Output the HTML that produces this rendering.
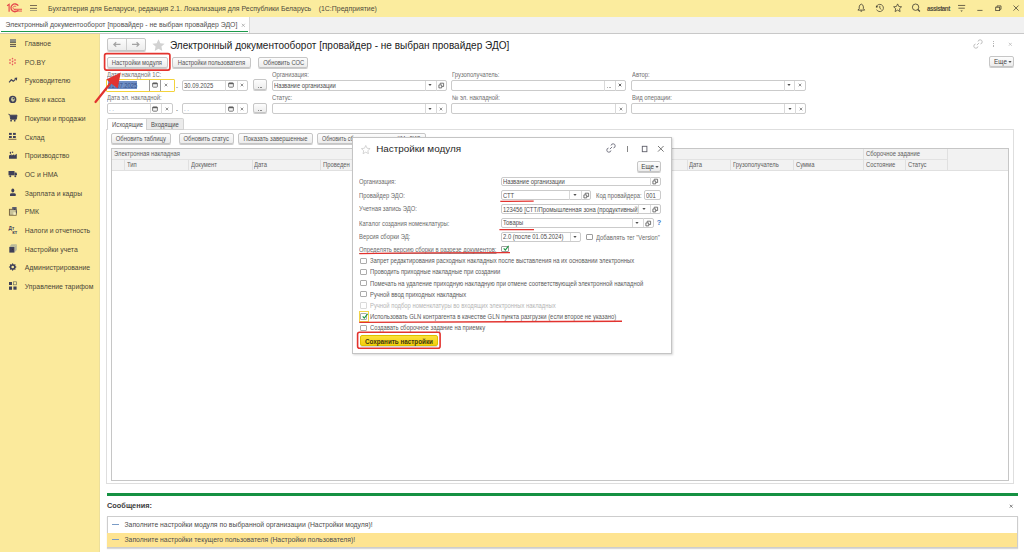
<!DOCTYPE html>
<html><head><meta charset="utf-8">
<style>
*{box-sizing:border-box;margin:0;padding:0}
html,body{width:1024px;height:552px;overflow:hidden;background:#fff;font-family:"Liberation Sans",sans-serif;color:#4d4d4d;position:relative}
.a{position:absolute}
.t{position:absolute;white-space:nowrap;line-height:1}
.btn{position:absolute;border:1px solid #c6c6c6;border-radius:2px;background:linear-gradient(#fdfdfd,#ececec);box-shadow:0 1px 0.6px rgba(0,0,0,.2);color:#4d4d4d;text-align:center;white-space:nowrap}
.fld{position:absolute;border:1px solid #cbcbcb;border-radius:2px;background:#fff}
</style></head><body>
<div class="a" style="left:0.00px;top:0.00px;width:1024.00px;height:16.50px;background:#fbec9e"></div>
<div class="a" style="left:0.00px;top:16.50px;width:1024.00px;height:16.50px;background:#f1f1f1"></div>
<div class="a" style="left:0.00px;top:33.00px;width:100.00px;height:1.00px;background:#d2c9b0"></div>
<div class="a" style="left:100.00px;top:33.00px;width:924.00px;height:1.00px;background:#c8c8c8"></div>
<div class="a" style="left:0.00px;top:16.50px;width:249.00px;height:16.50px;background:#fff"></div>
<div class="a" style="left:249.00px;top:16.50px;width:1.00px;height:16.50px;background:#d9d9d9"></div>
<div class="a" style="left:1.00px;top:30.50px;width:247.00px;height:1.50px;background:#1d9a4b"></div>
<div class="t" style="left:5.50px;top:22.10px;font-size:6.85px;color:#505050;">Электронный документооборот [провайдер - не выбран провайдер ЭДО]</div>
<svg class="a" style="left:241.00px;top:22.70px" width="4.6" height="4.6" viewBox="0 0 4 4"><path d="M0.7 0.7L3.3 3.3M3.3 0.7L0.7 3.3" stroke="#a8a8a8" stroke-width="0.70"/></svg>
<div class="t" style="left:48.00px;top:5.80px;font-size:6.95px;color:#4e4a3c;">Бухгалтерия для Беларуси, редакция 2.1. Локализация для Республики Беларусь</div>
<div class="t" style="left:318.70px;top:5.80px;font-size:6.95px;color:#4e4a3c;">(1С:Предприятие)</div>
<div class="a" style="left:0.00px;top:34.00px;width:100.00px;height:518.00px;background:#fbea9c"></div>
<div class="a" style="left:99.40px;top:34.00px;width:1.00px;height:518.00px;background:#ecdf9c"></div>
<div class="t" style="left:24.80px;top:41.10px;font-size:6.85px;color:#4a4638;">Главное</div>
<div class="t" style="left:24.80px;top:59.78px;font-size:6.85px;color:#4a4638;">РО.BY</div>
<div class="t" style="left:24.80px;top:78.46px;font-size:6.85px;color:#4a4638;">Руководителю</div>
<div class="t" style="left:24.80px;top:97.14px;font-size:6.85px;color:#4a4638;">Банк и касса</div>
<div class="t" style="left:24.80px;top:115.82px;font-size:6.85px;color:#4a4638;">Покупки и продажи</div>
<div class="t" style="left:24.80px;top:134.50px;font-size:6.85px;color:#4a4638;">Склад</div>
<div class="t" style="left:24.80px;top:153.18px;font-size:6.85px;color:#4a4638;">Производство</div>
<div class="t" style="left:24.80px;top:171.86px;font-size:6.85px;color:#4a4638;">ОС и НМА</div>
<div class="t" style="left:24.80px;top:190.54px;font-size:6.85px;color:#4a4638;">Зарплата и кадры</div>
<div class="t" style="left:24.80px;top:209.22px;font-size:6.85px;color:#4a4638;">РМК</div>
<div class="t" style="left:24.80px;top:227.90px;font-size:6.85px;color:#4a4638;">Налоги и отчетность</div>
<div class="t" style="left:24.80px;top:246.58px;font-size:6.85px;color:#4a4638;">Настройки учета</div>
<div class="t" style="left:24.80px;top:265.26px;font-size:6.85px;color:#4a4638;">Администрирование</div>
<div class="t" style="left:24.80px;top:283.94px;font-size:6.85px;color:#4a4638;">Управление тарифом</div>
<div class="btn" style="left:107px;top:38px;width:39px;height:12.5px"></div>
<div class="a" style="left:126.30px;top:38.60px;width:0.80px;height:11.40px;background:#cdcdcd"></div>
<svg class="a" style="left:104px;top:35px" width="44" height="18" viewBox="104 35 44 18"><path d="M113.8 44.4H120.5M116.2 42.2L113.9 44.4L116.2 46.6" fill="none" stroke="#a3a3a3" stroke-width="1.3"/><path d="M132 44.4H139M136.6 42.2L138.9 44.4L136.6 46.6" fill="none" stroke="#a3a3a3" stroke-width="1.3"/></svg>
<svg class="a" style="left:152px;top:38.5px" width="13" height="12" viewBox="0 0 24 23"><path d="M12 0.5l3.5 7.6 8.3 0.9-6.2 5.6 1.7 8.2L12 18.6l-7.3 4.2 1.7-8.2L0.2 9l8.3-0.9z" fill="#d2d2d2"/></svg>
<div class="t" style="left:170.00px;top:40.80px;font-size:10.03px;color:#222;">Электронный документооборот [провайдер - не выбран провайдер ЭДО]</div>
<svg class="a" style="left:973.00px;top:39.00px" width="10" height="10" viewBox="0 0 10 10"><g fill="none" stroke="#b9b9b9" stroke-width="0.9"><path d="M2.54 5.03A2.1 2.1 0 1 0 4.97 7.46"/><path d="M5.03 2.54A2.1 2.1 0 1 1 7.46 4.97"/><path d="M3.9 6.1L6.1 3.9"/></g></svg>
<div class="a" style="left:993.10px;top:41.10px;width:1.10px;height:1.30px;background:#b4b4b4"></div>
<div class="a" style="left:993.10px;top:43.20px;width:1.10px;height:1.30px;background:#b4b4b4"></div>
<div class="a" style="left:993.10px;top:45.30px;width:1.10px;height:1.40px;background:#b4b4b4"></div>
<svg class="a" style="left:1007.70px;top:41.70px" width="4.6" height="4.6" viewBox="0 0 4 4"><path d="M0.7 0.7L3.3 3.3M3.3 0.7L0.7 3.3" stroke="#bdbdbd" stroke-width="0.70"/></svg>
<div class="btn" style="left:106.50px;top:56.50px;width:61.50px;height:11.00px;"></div>
<div class="t" style="left:106.50px;top:59.50px;width:61.50px;text-align:center;font-size:6.5px;color:#555"><span style="display:inline-block;transform:scaleX(0.9000);">Настройки модуля</span></div>
<div class="btn" style="left:172.00px;top:56.50px;width:79.00px;height:11.00px;"></div>
<div class="t" style="left:172.00px;top:59.50px;width:79.00px;text-align:center;font-size:6.5px;color:#555"><span style="display:inline-block;transform:scaleX(0.9000);">Настройки пользователя</span></div>
<div class="btn" style="left:258.30px;top:56.50px;width:50.10px;height:11.00px;"></div>
<div class="t" style="left:258.30px;top:59.50px;width:50.10px;text-align:center;font-size:6.5px;color:#555"><span style="display:inline-block;transform:scaleX(0.9000);">Обновить СОС</span></div>
<div class="btn" style="left:989.30px;top:56.00px;width:24.40px;height:11.20px;"></div>
<div class="t" style="left:994.10px;top:59.00px;font-size:6.3px;color:#444;">Еще</div>
<svg class="a" style="left:1007.60px;top:60.30px" width="4" height="4" viewBox="0 0 4 4"><path d="M0.4 1.1H3.6L2 3Z" fill="#555"/></svg>
<div class="t" style="left:107.00px;top:72.00px;font-size:6.5px;color:#707070;transform:scaleX(0.9000);transform-origin:0 0;">Дата накладной 1С:</div>
<div class="t" style="left:272.20px;top:72.00px;font-size:6.5px;color:#707070;transform:scaleX(0.9000);transform-origin:0 0;">Организация:</div>
<div class="t" style="left:451.50px;top:72.00px;font-size:6.5px;color:#707070;transform:scaleX(0.9000);transform-origin:0 0;">Грузополучатель:</div>
<div class="t" style="left:631.50px;top:72.00px;font-size:6.5px;color:#707070;transform:scaleX(0.9000);transform-origin:0 0;">Автор:</div>
<div class="t" style="left:107.00px;top:95.00px;font-size:6.5px;color:#707070;transform:scaleX(0.9000);transform-origin:0 0;">Дата эл. накладной:</div>
<div class="t" style="left:272.20px;top:95.00px;font-size:6.5px;color:#707070;transform:scaleX(0.9000);transform-origin:0 0;">Статус:</div>
<div class="t" style="left:451.50px;top:95.00px;font-size:6.5px;color:#707070;transform:scaleX(0.9000);transform-origin:0 0;">№ эл. накладной:</div>
<div class="t" style="left:631.50px;top:95.00px;font-size:6.5px;color:#707070;transform:scaleX(0.9000);transform-origin:0 0;">Вид операции:</div>
<div class="a" style="left:105.50px;top:78.60px;width:69.00px;height:13.60px;border:1.2px solid #f3d33c;border-radius:1px;background:#fff"></div>
<div class="a" style="left:149.40px;top:80.00px;width:0.70px;height:10.80px;background:#9a9a9a"></div>
<div class="a" style="left:160.40px;top:80.00px;width:0.70px;height:10.80px;background:#9a9a9a"></div>
<div class="a" style="left:108.00px;top:81.40px;width:29.20px;height:7.20px;background:#6f8ec4"></div>
<div class="t" style="left:108.30px;top:82.60px;font-size:6.5px;color:#34508a;transform:scaleX(0.9000);transform-origin:0 0;">01.07.2025</div>
<svg class="a" style="left:152px;top:82px" width="6" height="6" viewBox="0 0 6 6"><rect x="0.6" y="0.9" width="4.8" height="4.3" rx="0.8" fill="#f4f4f4" stroke="#5e5e5e" stroke-width="0.8"/><rect x="0.6" y="0.9" width="4.8" height="1.3" fill="#5e5e5e"/></svg>
<svg class="a" style="left:164.30px;top:83.30px" width="4.0" height="4.0" viewBox="0 0 4 4"><path d="M0.7 0.7L3.3 3.3M3.3 0.7L0.7 3.3" stroke="#777" stroke-width="0.80"/></svg>
<div class="t" style="left:176.20px;top:83.50px;font-size:6.5px;color:#666;transform:scaleX(0.9000);transform-origin:0 0;">-</div>
<div class="fld" style="left:182.30px;top:80.00px;width:65.30px;height:11.00px;"></div>
<div class="a" style="left:225.40px;top:80.50px;width:0.80px;height:10.00px;background:#d9d9d9"></div>
<div class="a" style="left:236.50px;top:80.50px;width:0.80px;height:10.00px;background:#d9d9d9"></div>
<div class="t" style="left:183.80px;top:83.00px;font-size:6.5px;color:#4d4d4d;transform:scaleX(0.9000);transform-origin:0 0;">30.09.2025</div>
<svg class="a" style="left:228px;top:82px" width="6" height="6" viewBox="0 0 6 6"><rect x="0.6" y="0.9" width="4.8" height="4.3" rx="0.8" fill="#f4f4f4" stroke="#5e5e5e" stroke-width="0.8"/><rect x="0.6" y="0.9" width="4.8" height="1.3" fill="#5e5e5e"/></svg>
<svg class="a" style="left:240.00px;top:83.30px" width="4.0" height="4.0" viewBox="0 0 4 4"><path d="M0.7 0.7L3.3 3.3M3.3 0.7L0.7 3.3" stroke="#777" stroke-width="0.80"/></svg>
<div class="btn" style="left:252.60px;top:79.40px;width:14.90px;height:10.90px;"></div>
<div class="a" style="left:257.95px;top:86.95px;width:0.90px;height:0.90px;background:#8a8a8a"></div>
<div class="a" style="left:259.55px;top:86.95px;width:0.90px;height:0.90px;background:#8a8a8a"></div>
<div class="a" style="left:261.15px;top:86.95px;width:0.90px;height:0.90px;background:#8a8a8a"></div>
<div class="fld" style="left:272.20px;top:80.00px;width:174.50px;height:11.00px;"></div>
<div class="a" style="left:424.50px;top:80.50px;width:0.80px;height:10.00px;background:#d9d9d9"></div>
<div class="a" style="left:435.60px;top:80.50px;width:0.80px;height:10.00px;background:#d9d9d9"></div>
<div class="t" style="left:273.80px;top:83.00px;font-size:6.5px;color:#4d4d4d;transform:scaleX(0.9000);transform-origin:0 0;">Название организации</div>
<svg class="a" style="left:428.00px;top:83.30px" width="4" height="4" viewBox="0 0 4 4"><path d="M0.4 1.1H3.6L2 3Z" fill="#505050"/></svg>
<svg class="a" style="left:438px;top:82px" width="7" height="7" viewBox="0 0 7 7"><path d="M0.9 2.9H3.7V5.9H0.9Z" fill="#fff" stroke="#555" stroke-width="0.8"/><path d="M2.2 2.5V1.2H5.6V4.5H4.1" fill="none" stroke="#555" stroke-width="0.8"/></svg>
<div class="fld" style="left:451.20px;top:80.00px;width:174.80px;height:11.00px;"></div>
<div class="a" style="left:603.90px;top:80.50px;width:0.80px;height:10.00px;background:#d9d9d9"></div>
<div class="a" style="left:614.80px;top:80.50px;width:0.80px;height:10.00px;background:#d9d9d9"></div>
<div class="a" style="left:607.25px;top:86.95px;width:0.90px;height:0.90px;background:#b0b0b0"></div>
<div class="a" style="left:608.85px;top:86.95px;width:0.90px;height:0.90px;background:#b0b0b0"></div>
<div class="a" style="left:610.45px;top:86.95px;width:0.90px;height:0.90px;background:#b0b0b0"></div>
<svg class="a" style="left:618.20px;top:83.30px" width="4.0" height="4.0" viewBox="0 0 4 4"><path d="M0.7 0.7L3.3 3.3M3.3 0.7L0.7 3.3" stroke="#666" stroke-width="1.00"/></svg>
<div class="fld" style="left:631.40px;top:80.00px;width:174.30px;height:11.00px;"></div>
<div class="a" style="left:783.50px;top:80.50px;width:0.80px;height:10.00px;background:#d9d9d9"></div>
<div class="a" style="left:794.25px;top:80.50px;width:0.80px;height:10.00px;background:#d9d9d9"></div>
<svg class="a" style="left:787.00px;top:83.30px" width="4" height="4" viewBox="0 0 4 4"><path d="M0.4 1.1H3.6L2 3Z" fill="#505050"/></svg>
<svg class="a" style="left:798.00px;top:83.30px" width="4.0" height="4.0" viewBox="0 0 4 4"><path d="M0.7 0.7L3.3 3.3M3.3 0.7L0.7 3.3" stroke="#777" stroke-width="0.80"/></svg>
<div class="fld" style="left:107.00px;top:103.00px;width:65.50px;height:11.00px;"></div>
<div class="a" style="left:150.00px;top:103.50px;width:0.80px;height:10.00px;background:#d9d9d9"></div>
<div class="a" style="left:161.00px;top:103.50px;width:0.80px;height:10.00px;background:#d9d9d9"></div>
<div class="t" style="left:109.00px;top:106.00px;font-size:6.5px;color:#8aa0c0;transform:scaleX(0.9000);transform-origin:0 0;">. .</div>
<svg class="a" style="left:152px;top:106px" width="6" height="6" viewBox="0 0 6 6"><rect x="0.6" y="0.9" width="4.8" height="4.3" rx="0.8" fill="#f4f4f4" stroke="#5e5e5e" stroke-width="0.8"/><rect x="0.6" y="0.9" width="4.8" height="1.3" fill="#5e5e5e"/></svg>
<svg class="a" style="left:164.50px;top:106.50px" width="4.0" height="4.0" viewBox="0 0 4 4"><path d="M0.7 0.7L3.3 3.3M3.3 0.7L0.7 3.3" stroke="#777" stroke-width="0.80"/></svg>
<div class="t" style="left:176.20px;top:107.00px;font-size:6.5px;color:#666;transform:scaleX(0.9000);transform-origin:0 0;">-</div>
<div class="fld" style="left:182.30px;top:103.00px;width:65.30px;height:11.00px;"></div>
<div class="a" style="left:225.40px;top:103.50px;width:0.80px;height:10.00px;background:#d9d9d9"></div>
<div class="a" style="left:236.50px;top:103.50px;width:0.80px;height:10.00px;background:#d9d9d9"></div>
<div class="t" style="left:184.00px;top:106.00px;font-size:6.5px;color:#8aa0c0;transform:scaleX(0.9000);transform-origin:0 0;">. .</div>
<svg class="a" style="left:228px;top:106px" width="6" height="6" viewBox="0 0 6 6"><rect x="0.6" y="0.9" width="4.8" height="4.3" rx="0.8" fill="#f4f4f4" stroke="#5e5e5e" stroke-width="0.8"/><rect x="0.6" y="0.9" width="4.8" height="1.3" fill="#5e5e5e"/></svg>
<svg class="a" style="left:240.00px;top:106.50px" width="4.0" height="4.0" viewBox="0 0 4 4"><path d="M0.7 0.7L3.3 3.3M3.3 0.7L0.7 3.3" stroke="#777" stroke-width="0.80"/></svg>
<div class="btn" style="left:252.60px;top:102.60px;width:14.90px;height:10.90px;"></div>
<div class="a" style="left:257.95px;top:110.15px;width:0.90px;height:0.90px;background:#8a8a8a"></div>
<div class="a" style="left:259.55px;top:110.15px;width:0.90px;height:0.90px;background:#8a8a8a"></div>
<div class="a" style="left:261.15px;top:110.15px;width:0.90px;height:0.90px;background:#8a8a8a"></div>
<div class="fld" style="left:272.20px;top:103.00px;width:174.70px;height:11.00px;"></div>
<div class="a" style="left:424.50px;top:103.50px;width:0.80px;height:10.00px;background:#d9d9d9"></div>
<div class="a" style="left:435.60px;top:103.50px;width:0.80px;height:10.00px;background:#d9d9d9"></div>
<svg class="a" style="left:428.00px;top:106.50px" width="4" height="4" viewBox="0 0 4 4"><path d="M0.4 1.1H3.6L2 3Z" fill="#505050"/></svg>
<svg class="a" style="left:439.20px;top:106.50px" width="4.0" height="4.0" viewBox="0 0 4 4"><path d="M0.7 0.7L3.3 3.3M3.3 0.7L0.7 3.3" stroke="#777" stroke-width="0.80"/></svg>
<div class="fld" style="left:451.20px;top:103.00px;width:175.40px;height:11.00px;"></div>
<div class="a" style="left:615.30px;top:103.50px;width:0.80px;height:10.00px;background:#d9d9d9"></div>
<svg class="a" style="left:619.00px;top:106.50px" width="4.0" height="4.0" viewBox="0 0 4 4"><path d="M0.7 0.7L3.3 3.3M3.3 0.7L0.7 3.3" stroke="#777" stroke-width="0.80"/></svg>
<div class="fld" style="left:631.40px;top:103.00px;width:175.10px;height:11.00px;"></div>
<div class="a" style="left:783.90px;top:103.50px;width:0.80px;height:10.00px;background:#d9d9d9"></div>
<div class="a" style="left:795.00px;top:103.50px;width:0.80px;height:10.00px;background:#d9d9d9"></div>
<svg class="a" style="left:787.50px;top:106.50px" width="4" height="4" viewBox="0 0 4 4"><path d="M0.4 1.1H3.6L2 3Z" fill="#505050"/></svg>
<svg class="a" style="left:798.70px;top:106.50px" width="4.0" height="4.0" viewBox="0 0 4 4"><path d="M0.7 0.7L3.3 3.3M3.3 0.7L0.7 3.3" stroke="#777" stroke-width="0.80"/></svg>
<div class="a" style="left:106.20px;top:129.20px;width:907.80px;height:355.30px;border:1px solid #dedede;background:#fff"></div>
<div class="a" style="left:106.50px;top:118.30px;width:40.80px;height:11.90px;background:#fff;border:1px solid #d3d3d3;border-bottom:none;border-radius:2px 0 0 0"></div>
<div class="a" style="left:147.30px;top:118.30px;width:36.30px;height:11.70px;background:#ebebeb;border:1px solid #d3d3d3;border-left:none;border-radius:0 2px 0 0"></div>
<div class="t" style="left:111.50px;top:122.10px;font-size:6.5px;color:#4d4d4d;transform:scaleX(0.9000);transform-origin:0 0;">Исходящие</div>
<div class="t" style="left:151.00px;top:122.10px;font-size:6.5px;color:#4d4d4d;transform:scaleX(0.9000);transform-origin:0 0;">Входящие</div>
<div class="btn" style="left:111.40px;top:133.40px;width:59.60px;height:10.40px;"></div>
<div class="t" style="left:111.40px;top:136.10px;width:59.60px;text-align:center;font-size:6.5px;color:#555"><span style="display:inline-block;transform:scaleX(0.9000);">Обновить таблицу</span></div>
<div class="btn" style="left:178.70px;top:133.40px;width:55.30px;height:10.40px;"></div>
<div class="t" style="left:178.70px;top:136.10px;width:55.30px;text-align:center;font-size:6.5px;color:#555"><span style="display:inline-block;transform:scaleX(0.9000);">Обновить статус</span></div>
<div class="btn" style="left:238.30px;top:133.40px;width:74.90px;height:10.40px;"></div>
<div class="t" style="left:238.30px;top:136.10px;width:74.90px;text-align:center;font-size:6.5px;color:#555"><span style="display:inline-block;transform:scaleX(0.9000);">Показать завершенные</span></div>
<div class="btn" style="left:317.00px;top:133.40px;width:108.50px;height:10.40px;"></div>
<div class="t" style="left:322px;top:136.1px;font-size:6.5px;color:#555;transform:scaleX(0.8246);transform-origin:0 0">Обновить сборочное задание КМ - ГИС</div>
<div class="a" style="left:111.20px;top:148.20px;width:897.60px;height:332.50px;border:1px solid #c6c6c6;background:#fff"></div>
<div class="a" style="left:112.00px;top:149.00px;width:896.00px;height:21.30px;background:#f2f2f2"></div>
<div class="a" style="left:112.00px;top:159.20px;width:751.40px;height:0.80px;background:#e2e2e2"></div>
<div class="a" style="left:863.40px;top:159.20px;width:83.50px;height:0.80px;background:#e2e2e2"></div>
<div class="a" style="left:112.00px;top:170.00px;width:896.00px;height:1.00px;background:#e0e0e0"></div>
<div class="a" style="left:124.10px;top:159.60px;width:0.80px;height:10.70px;background:#e0e0e0"></div>
<div class="a" style="left:188.30px;top:159.60px;width:0.80px;height:10.70px;background:#e0e0e0"></div>
<div class="a" style="left:251.80px;top:159.60px;width:0.80px;height:10.70px;background:#e0e0e0"></div>
<div class="a" style="left:320.30px;top:159.60px;width:0.80px;height:10.70px;background:#e0e0e0"></div>
<div class="a" style="left:686.70px;top:159.60px;width:0.80px;height:10.70px;background:#e0e0e0"></div>
<div class="a" style="left:730.40px;top:159.60px;width:0.80px;height:10.70px;background:#e0e0e0"></div>
<div class="a" style="left:793.30px;top:159.60px;width:0.80px;height:10.70px;background:#e0e0e0"></div>
<div class="a" style="left:905.20px;top:159.60px;width:0.80px;height:10.70px;background:#e0e0e0"></div>
<div class="a" style="left:863.40px;top:149.00px;width:0.80px;height:21.30px;background:#e0e0e0"></div>
<div class="a" style="left:946.90px;top:149.00px;width:0.80px;height:21.30px;background:#e0e0e0"></div>
<div class="t" style="left:114.00px;top:151.10px;font-size:6.5px;color:#606060;transform:scaleX(0.9000);transform-origin:0 0;">Электронная накладная</div>
<div class="t" style="left:866.00px;top:151.10px;font-size:6.5px;color:#606060;transform:scaleX(0.9000);transform-origin:0 0;">Сборочное задание</div>
<div class="t" style="left:127.00px;top:162.20px;font-size:6.5px;color:#606060;transform:scaleX(0.9000);transform-origin:0 0;">Тип</div>
<div class="t" style="left:190.50px;top:162.20px;font-size:6.5px;color:#606060;transform:scaleX(0.9000);transform-origin:0 0;">Документ</div>
<div class="t" style="left:254.00px;top:162.20px;font-size:6.5px;color:#606060;transform:scaleX(0.9000);transform-origin:0 0;">Дата</div>
<div class="t" style="left:323.00px;top:162.20px;font-size:6.5px;color:#606060;transform:scaleX(0.9000);transform-origin:0 0;">Проведен</div>
<div class="t" style="left:689.00px;top:162.20px;font-size:6.5px;color:#606060;transform:scaleX(0.9000);transform-origin:0 0;">Дата</div>
<div class="t" style="left:733.00px;top:162.20px;font-size:6.5px;color:#606060;transform:scaleX(0.9000);transform-origin:0 0;">Грузополучатель</div>
<div class="t" style="left:796.00px;top:162.20px;font-size:6.5px;color:#606060;transform:scaleX(0.9000);transform-origin:0 0;">Сумма</div>
<div class="t" style="left:866.00px;top:162.20px;font-size:6.5px;color:#606060;transform:scaleX(0.9000);transform-origin:0 0;">Состояние</div>
<div class="t" style="left:907.50px;top:162.20px;font-size:6.5px;color:#606060;transform:scaleX(0.9000);transform-origin:0 0;">Статус</div>
<div class="a" style="left:106.50px;top:493.00px;width:911.20px;height:3.00px;background:#159142"></div>
<div class="t" style="left:107.00px;top:501.80px;font-size:7.38px;color:#3c3c3c;font-weight:700;">Сообщения:</div>
<svg class="a" style="left:1009.20px;top:504.20px" width="4.4" height="4.4" viewBox="0 0 4 4"><path d="M0.7 0.7L3.3 3.3M3.3 0.7L0.7 3.3" stroke="#666" stroke-width="0.73"/></svg>
<div class="a" style="left:106.50px;top:516.00px;width:911.20px;height:31.50px;border:1px solid #cdcdcd;background:#fff;box-shadow:0 1px 1px rgba(0,0,0,.15)"></div>
<div class="a" style="left:107.30px;top:532.90px;width:909.60px;height:13.90px;background:#fee491"></div>
<div class="a" style="left:112.30px;top:523.60px;width:6.70px;height:0.80px;background:#7a9cc6"></div>
<div class="a" style="left:112.30px;top:539.20px;width:6.70px;height:0.80px;background:#7a9cc6"></div>
<div class="t" style="left:124.50px;top:521.80px;font-size:6.84px;color:#4d4d4d;">Заполните настройки модуля по выбранной организации (Настройки модуля)!</div>
<div class="t" style="left:124.50px;top:537.30px;font-size:6.84px;color:#4d4d4d;">Заполните настройки текущего пользователя (Настройки пользователя)!</div>
<svg class="a" style="left:5px;top:36px" width="16" height="16" viewBox="0 0 16 16"><rect x="5" y="3" width="6" height="3.2" fill="#8f8f83"/><rect x="5" y="5.9" width="6" height="0.9" fill="#55554f"/><rect x="5" y="7.9" width="6" height="1" fill="#5d4f3f"/><rect x="5" y="9.8" width="6" height="1" fill="#3f4058"/></svg>
<svg class="a" style="left:5px;top:54px" width="16" height="16" viewBox="0 0 16 16"><ellipse cx="7.50" cy="4.60" rx="0.75" ry="0.95" fill="#e8585c"/><ellipse cx="10.01" cy="6.05" rx="0.75" ry="0.95" fill="#e8585c"/><ellipse cx="10.01" cy="8.95" rx="0.75" ry="0.95" fill="#e8585c"/><ellipse cx="7.50" cy="10.40" rx="0.75" ry="0.95" fill="#e8585c"/><ellipse cx="4.99" cy="8.95" rx="0.75" ry="0.95" fill="#e8585c"/><ellipse cx="4.99" cy="6.05" rx="0.75" ry="0.95" fill="#e8585c"/><ellipse cx="7.6" cy="7.4" rx="0.8" ry="1" fill="#e8585c" transform="rotate(35 7.6 7.4)"/></svg>
<svg class="a" style="left:5px;top:73px" width="16" height="16" viewBox="0 0 16 16"><path d="M4.1 9.4L6.4 6.7L8.3 8.2L10.4 6.4" fill="none" stroke="#3f4058" stroke-width="1.2" stroke-linejoin="round"/><path d="M9.2 4.9L12.2 4.6L11.9 7.7Z" fill="#3f4058"/></svg>
<svg class="a" style="left:5px;top:91px" width="16" height="16" viewBox="0 0 16 16"><circle cx="7.7" cy="8.4" r="3.7" fill="#3f4058"/><ellipse cx="7.9" cy="8.3" rx="1.8" ry="2.4" fill="#c8c89a"/><circle cx="8.4" cy="7.6" r="0.8" fill="#3f4058"/></svg>
<svg class="a" style="left:5px;top:110px" width="16" height="16" viewBox="0 0 16 16"><path d="M3.4 4.2L5 4.9L5.6 9.2H11.3L12 5.2H5.1" fill="#3f4058" stroke="#3f4058" stroke-width="0.9" stroke-linejoin="round"/><circle cx="6.1" cy="10.7" r="0.9" fill="#3f4058"/><circle cx="9.7" cy="10.7" r="0.9" fill="#3f4058"/></svg>
<svg class="a" style="left:5px;top:128px" width="16" height="16" viewBox="0 0 16 16"><rect x="4" y="4.9" width="2.8" height="2" fill="#3f4058"/><rect x="8" y="4.9" width="2.8" height="2" fill="#3f4058"/><rect x="4" y="8" width="2.8" height="2" fill="#3f4058"/><rect x="8" y="8" width="2.8" height="2" fill="#3f4058"/><rect x="3.4" y="10.8" width="8" height="0.9" fill="#6a5540"/></svg>
<svg class="a" style="left:5px;top:147px" width="16" height="16" viewBox="0 0 16 16"><path d="M4 11.8V8.6L6.6 7.3V8.5L9.2 7.2V8.4L11.8 6.8V11.8Z" fill="#3f4058"/><ellipse cx="5.4" cy="5.8" rx="0.7" ry="1.1" fill="#3f4058"/><circle cx="7.5" cy="5.2" r="0.8" fill="#3f4058"/></svg>
<svg class="a" style="left:5px;top:165px" width="16" height="16" viewBox="0 0 16 16"><rect x="3.5" y="6" width="6" height="4.3" fill="#3f4058"/><path d="M9.5 7.6H11.3L12 8.6V10.3H9.5Z" fill="#3f4058"/><circle cx="5.3" cy="11.2" r="0.95" fill="#3f4058"/><circle cx="10.3" cy="11.2" r="0.95" fill="#3f4058"/></svg>
<svg class="a" style="left:5px;top:184px" width="16" height="16" viewBox="0 0 16 16"><ellipse cx="7.8" cy="6.6" rx="1.5" ry="2" fill="#3f4058"/><path d="M5 11.9V10.3Q5 9.3 6.6 9.3H9.2Q10.7 9.3 10.7 10.3V11.9Z" fill="#3f4058"/></svg>
<svg class="a" style="left:5px;top:203px" width="16" height="16" viewBox="0 0 16 16"><rect x="4.4" y="6.3" width="6.8" height="5.9" fill="#c9c39a" stroke="#6e5c3c" stroke-width="0.9"/><rect x="8.4" y="9.3" width="2.4" height="2.5" fill="#f5eec0"/><rect x="7.2" y="4" width="4.4" height="2.6" fill="#5b5d6e"/><circle cx="9.6" cy="6.3" r="0.8" fill="#3f4058"/><rect x="11" y="7.4" width="0.7" height="3" fill="#3f4058"/></svg>
<svg class="a" style="left:5px;top:221px" width="16" height="16" viewBox="0 0 16 16"><text x="3.6" y="8.6" font-family="Liberation Sans" font-size="5.6" font-weight="700" fill="#3f4058" transform="scale(0.85 1)" transform-origin="3.6 8.6">Дт</text><text x="7.2" y="12.9" font-family="Liberation Sans" font-size="5" font-weight="700" fill="#3f4058">кт</text></svg>
<svg class="a" style="left:5px;top:240px" width="16" height="16" viewBox="0 0 16 16"><path d="M4.3 7L6.4 4.3H11.8L9.4 7Z" fill="#b9b99a"/><path d="M9.4 7L11.8 4.3V10L9.4 12.6Z" fill="#b4b69c"/><rect x="4.3" y="7" width="5.1" height="5.6" fill="#3f4058"/><circle cx="7.6" cy="9.4" r="0.6" fill="#4a2f2f"/></svg>
<svg class="a" style="left:5px;top:259px" width="16" height="16" viewBox="0 0 16 16"><g transform="translate(7.7 8)"><path d="M0 -4L1 -2.6L2.8 -2.8L2.6 -1L4 0L2.6 1L2.8 2.8L1 2.6L0 4L-1 2.6L-2.8 2.8L-2.6 1L-4 0L-2.6 -1L-2.8 -2.8L-1 -2.6Z" fill="#3f4058"/><circle r="1.3" fill="#fbec9e"/></g></svg>
<svg class="a" style="left:5px;top:278px" width="16" height="16" viewBox="0 0 16 16"><rect x="4" y="4" width="3" height="3" fill="#3f4058"/><rect x="8.6" y="3.8" width="2.8" height="3" fill="none" stroke="#6f7062" stroke-width="0.7"/><rect x="4" y="8.5" width="3" height="3.3" fill="#3f4058"/><rect x="8.4" y="8.5" width="3.2" height="3.2" fill="#3f4058"/></svg>
<svg class="a" style="left:0;top:0" width="44" height="16" viewBox="0 0 44 16"><path d="M7.1 5.8L9.1 4.4V11.7" fill="none" stroke="#e5474b" stroke-width="1.15"/><path d="M18.3 5.7A4 3.9 0 1 0 18.3 10" fill="none" stroke="#e5474b" stroke-width="1.3"/><path d="M16.2 6.6A1.9 1.7 0 1 0 15.5 9.4" fill="none" stroke="#e5474b" stroke-width="0.8"/><rect x="14" y="8.8" width="8" height="0.9" fill="#e5474b"/><rect x="14.5" y="10.6" width="7.5" height="0.9" fill="#e5474b"/><rect x="30" y="5" width="7" height="0.9" fill="#6b5f4c"/><rect x="30" y="7.9" width="7" height="0.9" fill="#6b5f4c"/><rect x="30" y="10" width="7" height="0.9" fill="#9a9577"/></svg>
<svg class="a" style="left:852px;top:0" width="172" height="16" viewBox="852 0 172 16"><path d="M857.9 10.1L859.2 8.7V6.9Q859.2 4.9 861.3 4.1Q863.4 4.9 863.4 6.9V8.7L864.7 10.1Z" fill="none" stroke="#4a4536" stroke-width="0.85" stroke-linejoin="round"/><path d="M860.5 11.1h1.6" stroke="#4a4536" stroke-width="1"/><path d="M877.1 5.6A3.6 3.6 0 1 1 876.6 9.6" fill="none" stroke="#4a4536" stroke-width="0.8"/><path d="M876 5.2L878.4 6.9L875.9 7.7Z" fill="#4a4536"/><path d="M879.8 5.8V8.2L881.3 9.4" fill="none" stroke="#4a4536" stroke-width="0.8"/><path d="M897.6 3.9L898.8 6.5L901.6 6.8L899.5 8.7L900.1 11.6L897.6 10.1L895.1 11.6L895.7 8.7L893.6 6.8L896.4 6.5Z" fill="none" stroke="#4a4536" stroke-width="0.8" stroke-linejoin="round"/><circle cx="915.6" cy="7.2" r="3.2" fill="none" stroke="#4a4536" stroke-width="0.85"/><path d="M917.9 9.5L919.9 11.5" stroke="#4a4536" stroke-width="1.2"/><path d="M958 5.45H965.2M958.4 8.2H964.8" stroke="#4a4536" stroke-width="0.8"/><path d="M960.4 10.4H962.8L961.6 11.8Z" fill="#4a4536"/><path d="M977.3 10.4H982.5" stroke="#4a4536" stroke-width="0.8"/><rect x="995.7" y="7.2" width="4" height="3.4" fill="none" stroke="#4a4536" stroke-width="0.8"/><path d="M997 7.2V5.9H1001V9.3H999.7" fill="none" stroke="#4a4536" stroke-width="0.8"/><path d="M1013.5 5.5L1018.6 10.6M1018.6 5.5L1013.5 10.6" stroke="#4a4536" stroke-width="0.8"/></svg>
<div class="t" style="left:927.00px;top:5.80px;font-size:6.3px;color:#55503f;font-weight:700;letter-spacing:-0.5px">assistant</div>
<div class="a" style="left:352.30px;top:137.30px;width:319.90px;height:216.50px;background:#fff;border:1px solid #c4c4c4;box-shadow:0.5px 1px 2px rgba(0,0,0,.16)"></div>
<svg class="a" style="left:361px;top:144.5px" width="9.5" height="9" viewBox="0 0 24 23"><path d="M12 1.2l3.3 7.1 7.8 0.9-5.8 5.3 1.6 7.7L12 18.3l-6.9 3.9 1.6-7.7L0.9 9.2l7.8-0.9z" fill="none" stroke="#bdbdbd" stroke-width="1.6"/></svg>
<div class="t" style="left:376.20px;top:144.10px;font-size:9.9px;color:#1f1f1f;">Настройки модуля</div>
<svg class="a" style="left:605.90px;top:143.20px" width="10" height="10" viewBox="0 0 10 10"><g fill="none" stroke="#6a6a78" stroke-width="0.9"><path d="M2.54 5.03A2.1 2.1 0 1 0 4.97 7.46"/><path d="M5.03 2.54A2.1 2.1 0 1 1 7.46 4.97"/><path d="M3.9 6.1L6.1 3.9"/></g></svg>
<div class="a" style="left:627.40px;top:146.20px;width:1.10px;height:1.40px;background:#858585"></div>
<div class="a" style="left:627.40px;top:148.30px;width:1.10px;height:1.40px;background:#858585"></div>
<div class="a" style="left:627.40px;top:150.40px;width:1.10px;height:1.40px;background:#858585"></div>
<svg class="a" style="left:641px;top:145px" width="7" height="8" viewBox="0 0 7 8"><rect x="1.3" y="1.3" width="4.6" height="5.4" fill="none" stroke="#5f5f6a" stroke-width="0.9"/></svg>
<svg class="a" style="left:657px;top:145px" width="8" height="8" viewBox="0 0 8 8"><path d="M1 1L6.6 6.6M6.6 1L1 6.6" stroke="#555" stroke-width="0.8"/></svg>
<div class="btn" style="left:636.50px;top:161.20px;width:24.50px;height:11.10px;"></div>
<div class="t" style="left:641.30px;top:164.10px;font-size:6.3px;color:#444;">Еще</div>
<svg class="a" style="left:654.60px;top:165.40px" width="4" height="4" viewBox="0 0 4 4"><path d="M0.4 1.1H3.6L2 3Z" fill="#555"/></svg>
<div class="t" style="left:359.10px;top:178.70px;font-size:6.5px;color:#6a6a6a;transform:scaleX(0.9000);transform-origin:0 0;">Организация:</div>
<div class="t" style="left:359.10px;top:192.50px;font-size:6.5px;color:#6a6a6a;transform:scaleX(0.9000);transform-origin:0 0;">Провайдер ЭДО:</div>
<div class="t" style="left:359.10px;top:206.00px;font-size:6.5px;color:#6a6a6a;transform:scaleX(0.9000);transform-origin:0 0;">Учетная запись ЭДО:</div>
<div class="t" style="left:359.10px;top:220.60px;font-size:6.5px;color:#6a6a6a;transform:scaleX(0.9000);transform-origin:0 0;">Каталог создания номенклатуры:</div>
<div class="t" style="left:359.10px;top:234.10px;font-size:6.5px;color:#6a6a6a;transform:scaleX(0.9000);transform-origin:0 0;">Версия сборки ЭД:</div>
<div class="t" style="left:359.10px;top:247.30px;font-size:6.5px;color:#6a6a6a;transform:scaleX(0.9000);transform-origin:0 0;text-decoration:underline;text-decoration-color:#9a9a9a">Определять версию сборки в разрезе документов:</div>
<div class="fld" style="left:501.20px;top:176.60px;width:159.80px;height:9.70px;"></div>
<div class="a" style="left:649.70px;top:177.10px;width:0.80px;height:8.70px;background:#d9d9d9"></div>
<div class="t" style="left:502.80px;top:178.95px;font-size:6.5px;color:#4d4d4d;transform:scaleX(0.9000);transform-origin:0 0;">Название организации</div>
<svg class="a" style="left:652px;top:178px" width="7" height="7" viewBox="0 0 7 7"><path d="M0.9 2.9H3.7V5.9H0.9Z" fill="#fff" stroke="#555" stroke-width="0.8"/><path d="M2.2 2.5V1.2H5.6V4.5H4.1" fill="none" stroke="#555" stroke-width="0.8"/></svg>
<div class="fld" style="left:501.00px;top:190.40px;width:90.30px;height:10.00px;"></div>
<div class="a" style="left:569.20px;top:190.90px;width:0.80px;height:9.00px;background:#d9d9d9"></div>
<div class="a" style="left:580.60px;top:190.90px;width:0.80px;height:9.00px;background:#d9d9d9"></div>
<div class="t" style="left:502.50px;top:192.90px;font-size:6.5px;color:#4d4d4d;transform:scaleX(0.9000);transform-origin:0 0;">СТТ</div>
<svg class="a" style="left:572.90px;top:193.40px" width="4" height="4" viewBox="0 0 4 4"><path d="M0.4 1.1H3.6L2 3Z" fill="#505050"/></svg>
<svg class="a" style="left:583px;top:192px" width="7" height="7" viewBox="0 0 7 7"><path d="M0.9 2.9H3.7V5.9H0.9Z" fill="#fff" stroke="#555" stroke-width="0.8"/><path d="M2.2 2.5V1.2H5.6V4.5H4.1" fill="none" stroke="#555" stroke-width="0.8"/></svg>
<div class="t" style="left:596.40px;top:192.90px;font-size:6.5px;color:#6a6a6a;transform:scaleX(0.9000);transform-origin:0 0;">Код провайдера:</div>
<div class="fld" style="left:644.00px;top:190.40px;width:16.70px;height:10.00px;"></div>
<div class="t" style="left:645.50px;top:192.90px;font-size:6.5px;color:#4d4d4d;transform:scaleX(0.9000);transform-origin:0 0;">001</div>
<div class="fld" style="left:501.00px;top:204.40px;width:160.00px;height:9.60px;"></div>
<div class="a" style="left:638.20px;top:204.90px;width:0.80px;height:8.60px;background:#d9d9d9"></div>
<div class="a" style="left:649.70px;top:204.90px;width:0.80px;height:8.60px;background:#d9d9d9"></div>
<div class="a" style="left:502px;top:205px;width:136px;height:8.6px;overflow:hidden">
<div class="t" style="left:0.50px;top:1.70px;font-size:6.5px;color:#4d4d4d;transform:scaleX(0.9000);transform-origin:0 0;">123456 [СТТ/Промышленная зона (продуктивный)]</div>
</div>
<svg class="a" style="left:642.00px;top:207.20px" width="4" height="4" viewBox="0 0 4 4"><path d="M0.4 1.1H3.6L2 3Z" fill="#505050"/></svg>
<svg class="a" style="left:652px;top:206px" width="7" height="7" viewBox="0 0 7 7"><path d="M0.9 2.9H3.7V5.9H0.9Z" fill="#fff" stroke="#555" stroke-width="0.8"/><path d="M2.2 2.5V1.2H5.6V4.5H4.1" fill="none" stroke="#555" stroke-width="0.8"/></svg>
<div class="fld" style="left:501.20px;top:217.90px;width:152.80px;height:10.10px;"></div>
<div class="a" style="left:631.60px;top:218.40px;width:0.80px;height:9.10px;background:#d9d9d9"></div>
<div class="a" style="left:642.60px;top:218.40px;width:0.80px;height:9.10px;background:#d9d9d9"></div>
<div class="t" style="left:502.80px;top:220.45px;font-size:6.5px;color:#4d4d4d;transform:scaleX(0.9000);transform-origin:0 0;">Товары</div>
<svg class="a" style="left:635.10px;top:221.00px" width="4" height="4" viewBox="0 0 4 4"><path d="M0.4 1.1H3.6L2 3Z" fill="#505050"/></svg>
<svg class="a" style="left:645px;top:220px" width="7" height="7" viewBox="0 0 7 7"><path d="M0.9 2.9H3.7V5.9H0.9Z" fill="#fff" stroke="#555" stroke-width="0.8"/><path d="M2.2 2.5V1.2H5.6V4.5H4.1" fill="none" stroke="#555" stroke-width="0.8"/></svg>
<div class="t" style="left:656.80px;top:219.10px;font-size:7.38px;color:#3f78c6;font-weight:700;">?</div>
<div class="fld" style="left:501.00px;top:232.00px;width:80.00px;height:9.60px;"></div>
<div class="a" style="left:569.70px;top:232.50px;width:0.80px;height:8.60px;background:#d9d9d9"></div>
<div class="t" style="left:502.50px;top:234.30px;font-size:6.5px;color:#4d4d4d;transform:scaleX(0.9000);transform-origin:0 0;">2.0 (после 01.05.2024)</div>
<svg class="a" style="left:573.30px;top:234.80px" width="4" height="4" viewBox="0 0 4 4"><path d="M0.4 1.1H3.6L2 3Z" fill="#505050"/></svg>
<div class="a" style="left:586.40px;top:233.70px;width:6.20px;height:6.50px;border:1px solid #9d9d9d;border-radius:1px;background:#fff"></div>
<div class="t" style="left:595.50px;top:234.50px;font-size:6.5px;color:#6a6a6a;transform:scaleX(0.9000);transform-origin:0 0;">Добавлять тег "Version"</div>
<div class="a" style="left:501.00px;top:246.00px;width:7.70px;height:6.30px;border:1px solid #9d9d9d;border-radius:1px;background:#fff"></div>
<svg class="a" style="left:501.5px;top:244px" width="8" height="8" viewBox="0 0 8 8"><path d="M1.7 4.4L3.3 6.2L6.6 1.9" fill="none" stroke="#1f9b45" stroke-width="1.15"/></svg>
<div class="a" style="left:360.20px;top:257.70px;width:6.40px;height:6.30px;border:1px solid #ababab;border-radius:1px;background:#fff"></div>
<div class="t" style="left:369.50px;top:258.30px;font-size:6.5px;color:#5a5a5a;transform:scaleX(0.9000);transform-origin:0 0;">Запрет редактирования расходных накладных после выставления на их основании электронных</div>
<div class="a" style="left:360.20px;top:268.85px;width:6.40px;height:6.30px;border:1px solid #ababab;border-radius:1px;background:#fff"></div>
<div class="t" style="left:369.50px;top:269.45px;font-size:6.5px;color:#5a5a5a;transform:scaleX(0.9000);transform-origin:0 0;">Проводить приходные накладные при создании</div>
<div class="a" style="left:360.20px;top:280.00px;width:6.40px;height:6.30px;border:1px solid #ababab;border-radius:1px;background:#fff"></div>
<div class="t" style="left:369.50px;top:280.60px;font-size:6.5px;color:#5a5a5a;transform:scaleX(0.9000);transform-origin:0 0;">Помечать на удаление приходную накладную при отмене соответствующей электронной накладной</div>
<div class="a" style="left:360.20px;top:291.15px;width:6.40px;height:6.30px;border:1px solid #ababab;border-radius:1px;background:#fff"></div>
<div class="t" style="left:369.50px;top:291.75px;font-size:6.5px;color:#5a5a5a;transform:scaleX(0.9000);transform-origin:0 0;">Ручной ввод приходных накладных</div>
<div class="a" style="left:360.20px;top:302.30px;width:6.40px;height:6.30px;border:1px solid #dadada;border-radius:1px;background:#fff"></div>
<div class="t" style="left:369.50px;top:302.90px;font-size:6.5px;color:#b5b5b5;transform:scaleX(0.9000);transform-origin:0 0;">Ручной подбор номенклатуры во входящих электронных накладных</div>
<div class="a" style="left:360.20px;top:313.45px;width:6.40px;height:6.30px;border:1px solid #ababab;border-radius:1px;background:#fff"></div>
<div class="t" style="left:369.50px;top:314.05px;font-size:6.5px;color:#5a5a5a;transform:scaleX(0.9000);transform-origin:0 0;">Использовать GLN контрагента в качестве GLN пункта разгрузки (если второе не указано)</div>
<div class="a" style="left:360.20px;top:324.60px;width:6.40px;height:6.30px;border:1px solid #ababab;border-radius:1px;background:#fff"></div>
<div class="t" style="left:369.50px;top:325.20px;font-size:6.5px;color:#5a5a5a;transform:scaleX(0.9000);transform-origin:0 0;">Создавать сборочное задание на приемку</div>
<div class="a" style="left:358.60px;top:311.00px;width:10.20px;height:11.00px;border:1px solid #f3d54a"></div>
<svg class="a" style="left:360.5px;top:311.55px" width="8" height="8" viewBox="0 0 8 8"><path d="M1.7 4.4L3.3 6.2L6.6 1.9" fill="none" stroke="#1f9b45" stroke-width="1.15"/></svg>
<div class="btn" style="left:359.7px;top:335px;width:78.6px;height:10.6px;background:linear-gradient(#fbe03a,#f3cf0c);border-color:#dcc000;box-shadow:0 1px 0.6px rgba(0,0,0,.15)"></div>
<div class="t" style="left:365.00px;top:338.50px;font-size:6.3px;color:#403610;font-weight:700;">Сохранить настройки</div>
<svg class="a" style="left:0;top:0" width="1024" height="552" viewBox="0 0 1024 552"><rect x="104.6" y="53.6" width="65.3" height="16.5" rx="2" fill="none" stroke="#e3342f" stroke-width="1.7"/><rect x="357.6" y="332.3" width="82.5" height="16" rx="2" fill="none" stroke="#e3342f" stroke-width="1.6"/><path d="M95.5 102L113 80" stroke="#e2332f" stroke-width="2.2" stroke-linecap="round"/><path d="M120.8 72.5L106.3 79.6L117.6 88.4Z" fill="#e2332f"/><path d="M500.3 201.4L533.7 201.2" stroke="#e2332f" stroke-width="1.3"/><path d="M499.4 229.7L534 229.7" stroke="#e2332f" stroke-width="1.3"/><path d="M359.4 253.6Q430 252.6 510 252.6" fill="none" stroke="#e2332f" stroke-width="1.3"/><path d="M359.2 322.4Q480 322 622 321.2" fill="none" stroke="#e2332f" stroke-width="1.4"/></svg>
</body></html>
